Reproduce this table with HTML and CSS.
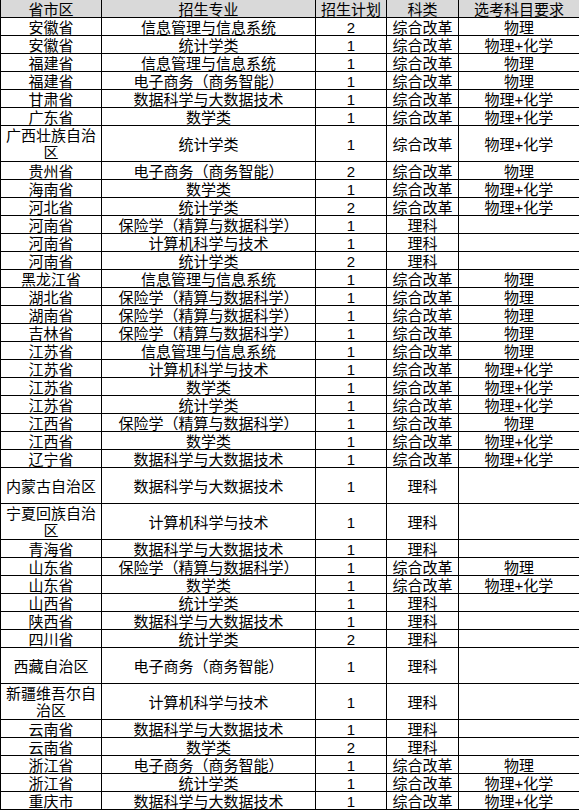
FILE: index.html
```html
<!DOCTYPE html>
<html lang="zh-CN">
<head>
<meta charset="utf-8">
<title>招生计划</title>
<link rel="stylesheet" href="styles.css">
</head>
<body>
<table class="plan">
<colgroup>
<col class="c1"><col class="c2"><col class="c3"><col class="c4"><col class="c5">
</colgroup>
<thead>
<tr><th>省市区</th><th>招生专业</th><th>招生计划</th><th>科类</th><th>选考科目要求</th></tr>
</thead>
<tbody>
<tr><td>安徽省</td><td>信息管理与信息系统</td><td>2</td><td>综合改革</td><td>物理</td></tr>
<tr><td>安徽省</td><td>统计学类</td><td>1</td><td>综合改革</td><td>物理+化学</td></tr>
<tr><td>福建省</td><td>信息管理与信息系统</td><td>1</td><td>综合改革</td><td>物理</td></tr>
<tr><td>福建省</td><td>电子商务（商务智能）</td><td>1</td><td>综合改革</td><td>物理</td></tr>
<tr><td>甘肃省</td><td>数据科学与大数据技术</td><td>1</td><td>综合改革</td><td>物理+化学</td></tr>
<tr><td>广东省</td><td>数学类</td><td>1</td><td>综合改革</td><td>物理+化学</td></tr>
<tr class="tall"><td>广西壮族自治区</td><td>统计学类</td><td>1</td><td>综合改革</td><td>物理+化学</td></tr>
<tr><td>贵州省</td><td>电子商务（商务智能）</td><td>2</td><td>综合改革</td><td>物理</td></tr>
<tr><td>海南省</td><td>数学类</td><td>1</td><td>综合改革</td><td>物理+化学</td></tr>
<tr><td>河北省</td><td>统计学类</td><td>2</td><td>综合改革</td><td>物理+化学</td></tr>
<tr><td>河南省</td><td>保险学（精算与数据科学）</td><td>1</td><td>理科</td><td></td></tr>
<tr><td>河南省</td><td>计算机科学与技术</td><td>1</td><td>理科</td><td></td></tr>
<tr><td>河南省</td><td>统计学类</td><td>2</td><td>理科</td><td></td></tr>
<tr><td>黑龙江省</td><td>信息管理与信息系统</td><td>1</td><td>综合改革</td><td>物理</td></tr>
<tr><td>湖北省</td><td>保险学（精算与数据科学）</td><td>1</td><td>综合改革</td><td>物理</td></tr>
<tr><td>湖南省</td><td>保险学（精算与数据科学）</td><td>1</td><td>综合改革</td><td>物理</td></tr>
<tr><td>吉林省</td><td>保险学（精算与数据科学）</td><td>1</td><td>综合改革</td><td>物理</td></tr>
<tr><td>江苏省</td><td>信息管理与信息系统</td><td>1</td><td>综合改革</td><td>物理</td></tr>
<tr><td>江苏省</td><td>计算机科学与技术</td><td>1</td><td>综合改革</td><td>物理+化学</td></tr>
<tr><td>江苏省</td><td>数学类</td><td>1</td><td>综合改革</td><td>物理+化学</td></tr>
<tr><td>江苏省</td><td>统计学类</td><td>1</td><td>综合改革</td><td>物理+化学</td></tr>
<tr><td>江西省</td><td>保险学（精算与数据科学）</td><td>1</td><td>综合改革</td><td>物理</td></tr>
<tr><td>江西省</td><td>数学类</td><td>1</td><td>综合改革</td><td>物理+化学</td></tr>
<tr><td>辽宁省</td><td>数据科学与大数据技术</td><td>1</td><td>综合改革</td><td>物理+化学</td></tr>
<tr class="tall"><td>内蒙古自治区</td><td>数据科学与大数据技术</td><td>1</td><td>理科</td><td></td></tr>
<tr class="tall"><td>宁夏回族自治区</td><td>计算机科学与技术</td><td>1</td><td>理科</td><td></td></tr>
<tr><td>青海省</td><td>数据科学与大数据技术</td><td>1</td><td>理科</td><td></td></tr>
<tr><td>山东省</td><td>保险学（精算与数据科学）</td><td>1</td><td>综合改革</td><td>物理</td></tr>
<tr><td>山东省</td><td>数学类</td><td>1</td><td>综合改革</td><td>物理+化学</td></tr>
<tr><td>山西省</td><td>统计学类</td><td>1</td><td>理科</td><td></td></tr>
<tr><td>陕西省</td><td>数据科学与大数据技术</td><td>1</td><td>理科</td><td></td></tr>
<tr><td>四川省</td><td>统计学类</td><td>2</td><td>理科</td><td></td></tr>
<tr class="tall"><td>西藏自治区</td><td>电子商务（商务智能）</td><td>1</td><td>理科</td><td></td></tr>
<tr class="tall"><td>新疆维吾尔自治区</td><td>计算机科学与技术</td><td>1</td><td>理科</td><td></td></tr>
<tr><td>云南省</td><td>数据科学与大数据技术</td><td>1</td><td>理科</td><td></td></tr>
<tr><td>云南省</td><td>数学类</td><td>2</td><td>理科</td><td></td></tr>
<tr><td>浙江省</td><td>电子商务（商务智能）</td><td>1</td><td>综合改革</td><td>物理</td></tr>
<tr><td>浙江省</td><td>统计学类</td><td>1</td><td>综合改革</td><td>物理+化学</td></tr>
<tr><td>重庆市</td><td>数据科学与大数据技术</td><td>1</td><td>综合改革</td><td>物理+化学</td></tr>
</tbody>
</table>
</body>
</html>
```
FILE: styles.css
```css
html, body {
  margin: 0;
  padding: 0;
  background: #ffffff;
}
.plan {
  border-collapse: collapse;
  table-layout: fixed;
  width: 579px;
  font-family: "Liberation Sans", "Noto Sans CJK SC", sans-serif;
  font-size: 15px;
  color: #000;
}
.c1 { width: 101px; }
.c2 { width: 214px; }
.c3 { width: 71px; }
.c4 { width: 72px; }
.c5 { width: 121px; }
.plan th,
.plan td {
  border: 1px solid #000;
  padding: 2px 0 0;
  height: 15px;
  line-height: 15px;
  text-align: center;
  vertical-align: middle;
  font-weight: normal;
  white-space: normal;
}
.plan th {
  background: #d9d9d9;
  border-top: none;
}
.plan .tall td {
  padding-top: 1px;
  height: 34px;
  line-height: 17px;
}
```
